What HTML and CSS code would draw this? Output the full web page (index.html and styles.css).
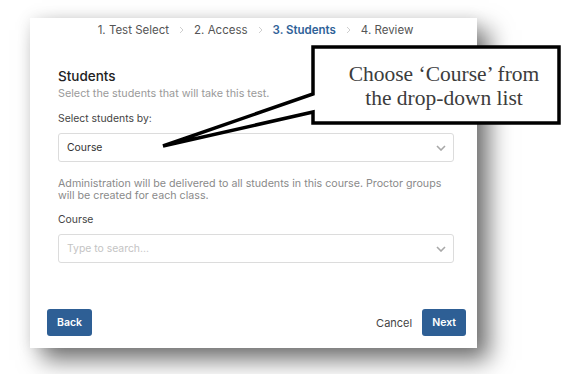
FILE: index.html
```html
<!DOCTYPE html>
<html lang="en">
<head>
    <meta charset="UTF-8">
    <meta name="viewport" content="width=device-width, initial-scale=1.0">
    <title>Students</title>
    <link rel="stylesheet" href="styles.css">
</head>
<body>
    <div class="card">
        <div class="steps">
            <span class="step">1. Test Select</span>
            <svg class="step-sep" width="5" height="8" viewBox="0 0 5 8"><path d="M1 1l3 3-3 3" fill="none" stroke="#cfcfcf" stroke-width="1"/></svg>
            <span class="step">2. Access</span>
            <svg class="step-sep" width="5" height="8" viewBox="0 0 5 8"><path d="M1 1l3 3-3 3" fill="none" stroke="#cfcfcf" stroke-width="1"/></svg>
            <span class="step active">3. Students</span>
            <svg class="step-sep" width="5" height="8" viewBox="0 0 5 8"><path d="M1 1l3 3-3 3" fill="none" stroke="#cfcfcf" stroke-width="1"/></svg>
            <span class="step">4. Review</span>
        </div>

        <div class="content">
            <h2>Students</h2>
            <p class="subtitle">Select the students that will take this test.</p>

            <label class="field-label">Select students by:</label>
            <div class="select">
                <span class="select-value">Course</span>
                <svg class="chevron" width="10" height="6" viewBox="0 0 10 6"><path d="M1 1l4 4 4-4" fill="none" stroke="#a8a8a8" stroke-width="1.6"/></svg>
            </div>

            <p class="note">Administration will be delivered to all students in this course. Proctor groups will be created for each class.</p>

            <label class="field-label course-label">Course</label>
            <div class="select">
                <span class="select-value placeholder">Type to search...</span>
                <svg class="chevron" width="10" height="6" viewBox="0 0 10 6"><path d="M1 1l4 4 4-4" fill="none" stroke="#a8a8a8" stroke-width="1.6"/></svg>
            </div>
        </div>

        <div class="footer">
            <button class="btn">Back</button>
            <div class="footer-right">
                <button class="link-btn">Cancel</button>
                <button class="btn">Next</button>
            </div>
        </div>
    </div>

    <!-- annotation over the screenshot -->
    <svg class="callout-shape" width="568" height="374" viewBox="0 0 568 374">
        <path d="M313 47H559V123H313V112L163 146L313 94Z" fill="#fff" stroke="#000" stroke-width="3.5" stroke-linejoin="miter"/>
    </svg>
    <div class="callout-text">Choose ‘Course’ from<br>the drop-down list</div>
</body>
</html>
```

FILE: styles.css
```css
body {
    margin: 0;
    background: #fff;
    font-family: Inter, 'Open Sans', Arial, sans-serif;
    color: #333;
    width: 568px;
    height: 374px;
    overflow: hidden;
    position: relative;
}

.card {
    margin: 18px 0 0 30px;
    width: 447px;
    height: 330px;
    background: #fff;
    box-shadow: 0 0 14px rgba(0,0,0,0.08), 12px 12px 22px rgba(0,0,0,0.55);
    display: flex;
    flex-direction: column;
}

.steps {
    display: flex;
    justify-content: center;
    align-items: center;
    gap: 10px;
    padding: 3px 0 0 4px;
    height: 18px;
    font-size: 11.5px;
    line-height: 14px;
    color: #555;
}

.step.active {
    color: #2f6298;
    font-weight: 600;
}

.content {
    padding: 0 23px 0 28px;
}

h2 {
    margin: 28px 0 0;
    font-size: 13.5px;
    line-height: 18px;
    font-weight: 500;
    color: #222;
}

.subtitle {
    margin: 2px 0 0;
    font-size: 10.8px;
    line-height: 14px;
    color: #9a9a9a;
}

.field-label {
    display: block;
    margin-top: 11px;
    font-size: 10.4px;
    line-height: 14px;
    color: #444;
}

.select {
    margin-top: 7px;
    height: 29px;
    box-sizing: border-box;
    border: 1px solid #dcdcdc;
    border-radius: 3px;
    display: flex;
    align-items: center;
    justify-content: space-between;
    padding: 0 7px 0 8px;
}

.select-value {
    font-size: 10.4px;
    color: #333;
}

.select-value.placeholder {
    color: #c4c4c4;
}

.note {
    margin: 16px 0 0;
    max-width: 392px;
    font-size: 10.7px;
    line-height: 12px;
    color: #8a8a8a;
}

.course-label {
    margin-top: 11px;
}

.footer {
    margin-top: auto;
    padding: 0 11px 12px 17px;
    display: flex;
    justify-content: space-between;
    align-items: center;
}

.footer-right {
    display: flex;
    align-items: center;
    gap: 10px;
}

.btn {
    height: 27px;
    padding: 0 10px;
    border: none;
    border-radius: 3px;
    background: #2e5f95;
    color: #fff;
    font-family: inherit;
    font-size: 10.5px;
    font-weight: 600;
}

.link-btn {
    border: none;
    background: none;
    padding: 0;
    font-family: inherit;
    font-size: 11px;
    color: #444;
}

.callout-shape {
    position: absolute;
    left: 0;
    top: 0;
}

.callout-text {
    position: absolute;
    left: 323px;
    top: 62px;
    width: 242px;
    text-align: center;
    font-family: 'Liberation Serif', 'Times New Roman', serif;
    font-size: 21.5px;
    line-height: 24px;
    color: #3c3c3c;
}
```
